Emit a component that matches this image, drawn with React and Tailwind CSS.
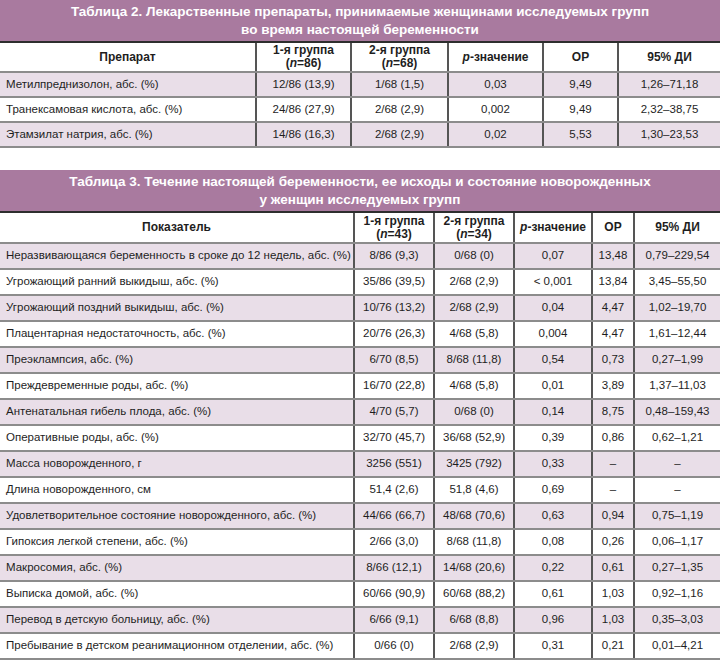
import React from "react";

const font = { fontFamily: '"Liberation Sans", Arial, sans-serif' };

const drugs = [
    ["Метилпреднизолон, абс. (%)", "12/86 (13,9)", "1/68 (1,5)", "0,03", "9,49", "1,26–71,18"],
    ["Транексамовая кислота, абс. (%)", "24/86 (27,9)", "2/68 (2,9)", "0,002", "9,49", "2,32–38,75"],
    ["Этамзилат натрия, абс. (%)", "14/86 (16,3)", "2/68 (2,9)", "0,02", "5,53", "1,30–23,53"],
];

const outcomes = [
    ["Неразвивающаяся беременность в сроке до 12 недель, абс. (%)", "8/86 (9,3)", "0/68 (0)", "0,07", "13,48", "0,79–229,54"],
    ["Угрожающий ранний выкидыш, абс. (%)", "35/86 (39,5)", "2/68 (2,9)", "< 0,001", "13,84", "3,45–55,50"],
    ["Угрожающий поздний выкидыш, абс. (%)", "10/76 (13,2)", "2/68 (2,9)", "0,04", "4,47", "1,02–19,70"],
    ["Плацентарная недостаточность, абс. (%)", "20/76 (26,3)", "4/68 (5,8)", "0,004", "4,47", "1,61–12,44"],
    ["Преэклампсия, абс. (%)", "6/70 (8,5)", "8/68 (11,8)", "0,54", "0,73", "0,27–1,99"],
    ["Преждевременные роды, абс. (%)", "16/70 (22,8)", "4/68 (5,8)", "0,01", "3,89", "1,37–11,03"],
    ["Антенатальная гибель плода, абс. (%)", "4/70 (5,7)", "0/68 (0)", "0,14", "8,75", "0,48–159,43"],
    ["Оперативные роды, абс. (%)", "32/70 (45,7)", "36/68 (52,9)", "0,39", "0,86", "0,62–1,21"],
    ["Масса новорожденного, г", "3256 (551)", "3425 (792)", "0,33", "–", "–"],
    ["Длина новорожденного, см", "51,4 (2,6)", "51,8 (4,6)", "0,69", "–", "–"],
    ["Удовлетворительное состояние новорожденного, абс. (%)", "44/66 (66,7)", "48/68 (70,6)", "0,63", "0,94", "0,75–1,19"],
    ["Гипоксия легкой степени, абс. (%)", "2/66 (3,0)", "8/68 (11,8)", "0,08", "0,26", "0,06–1,17"],
    ["Макросомия, абс. (%)", "8/66 (12,1)", "14/68 (20,6)", "0,22", "0,61", "0,27–1,35"],
    ["Выписка домой, абс. (%)", "60/66 (90,9)", "60/68 (88,2)", "0,61", "1,03", "0,92–1,16"],
    ["Перевод в детскую больницу, абс. (%)", "6/66 (9,1)", "6/68 (8,8)", "0,96", "1,03", "0,35–3,03"],
    ["Пребывание в детском реанимационном отделении, абс. (%)", "0/66 (0)", "2/68 (2,9)", "0,31", "0,21", "0,01–4,21"],
];

const Title = ({ lines }) => (
    <div className="bg-[#a97a9f] border-b-2 border-[#2e2e2e] h-[43px] flex flex-col items-center justify-center text-white font-bold text-[13.5px] leading-[18px]">
        {lines.map((l) => (
            <div key={l}>{l}</div>
        ))}
    </div>
);

const Group = ({ name, n }) => (
    <>
        <div>{name}</div>
        <div>
            (<i>n</i>={n})
        </div>
    </>
);

function Table({ cols, title, head, rows, headH, rowH }) {
    return (
        <div>
            <Title lines={title} />
            <div className={`grid ${cols} ${headH} border-b-2 border-[#8c8c8c] font-bold text-[12px] leading-[13px]`}>
                <div className="flex items-center justify-center">{head[0]}</div>
                {head.slice(1).map((h, i) => (
                    <div key={i} className="flex flex-col items-center justify-center border-l-2 border-[#555] text-center">
                        {h}
                    </div>
                ))}
            </div>
            {rows.map((r, i) => (
                <div
                    key={i}
                    className={`grid ${cols} ${rowH} border-b-2 border-[#8c8c8c] text-[11.5px] ${i % 2 === 0 ? "bg-[#e9dee8]" : "bg-white"}`}
                >
                    <div className="flex items-center pl-[6px] whitespace-nowrap">{r[0]}</div>
                    {r.slice(1).map((c, j) => (
                        <div key={j} className="flex items-center justify-center border-l-2 border-[#555] whitespace-nowrap">
                            {c}
                        </div>
                    ))}
                </div>
            ))}
        </div>
    );
}

export default function App() {
    return (
        <div className="w-[720px] h-[668px] bg-white text-[#1e1e1e]" style={font}>
            <Table
                cols="grid-cols-[255px_95px_97px_95px_75px_103px]"
                title={[
                    "Таблица 2. Лекарственные препараты, принимаемые женщинами исследуемых групп",
                    "во время настоящей беременности",
                ]}
                head={[
                    "Препарат",
                    <Group name="1-я группа" n="86" />,
                    <Group name="2-я группа" n="68" />,
                    <span>
                        <i>p</i>-значение
                    </span>,
                    "ОР",
                    "95% ДИ",
                ]}
                rows={drugs}
                headH="h-[30px]"
                rowH="h-[25px]"
            />
            <div className="h-[22px]" />
            <Table
                cols="grid-cols-[353px_80px_80px_78px_42px_87px]"
                title={[
                    "Таблица 3. Течение настоящей беременности, ее исходы и состояние новорожденных",
                    "у женщин исследуемых групп",
                ]}
                head={[
                    "Показатель",
                    <Group name="1-я группа" n="43" />,
                    <Group name="2-я группа" n="34" />,
                    <span>
                        <i>p</i>-значение
                    </span>,
                    "ОР",
                    "95% ДИ",
                ]}
                rows={outcomes}
                headH="h-[31px]"
                rowH="h-[26px]"
            />
        </div>
    );
}
